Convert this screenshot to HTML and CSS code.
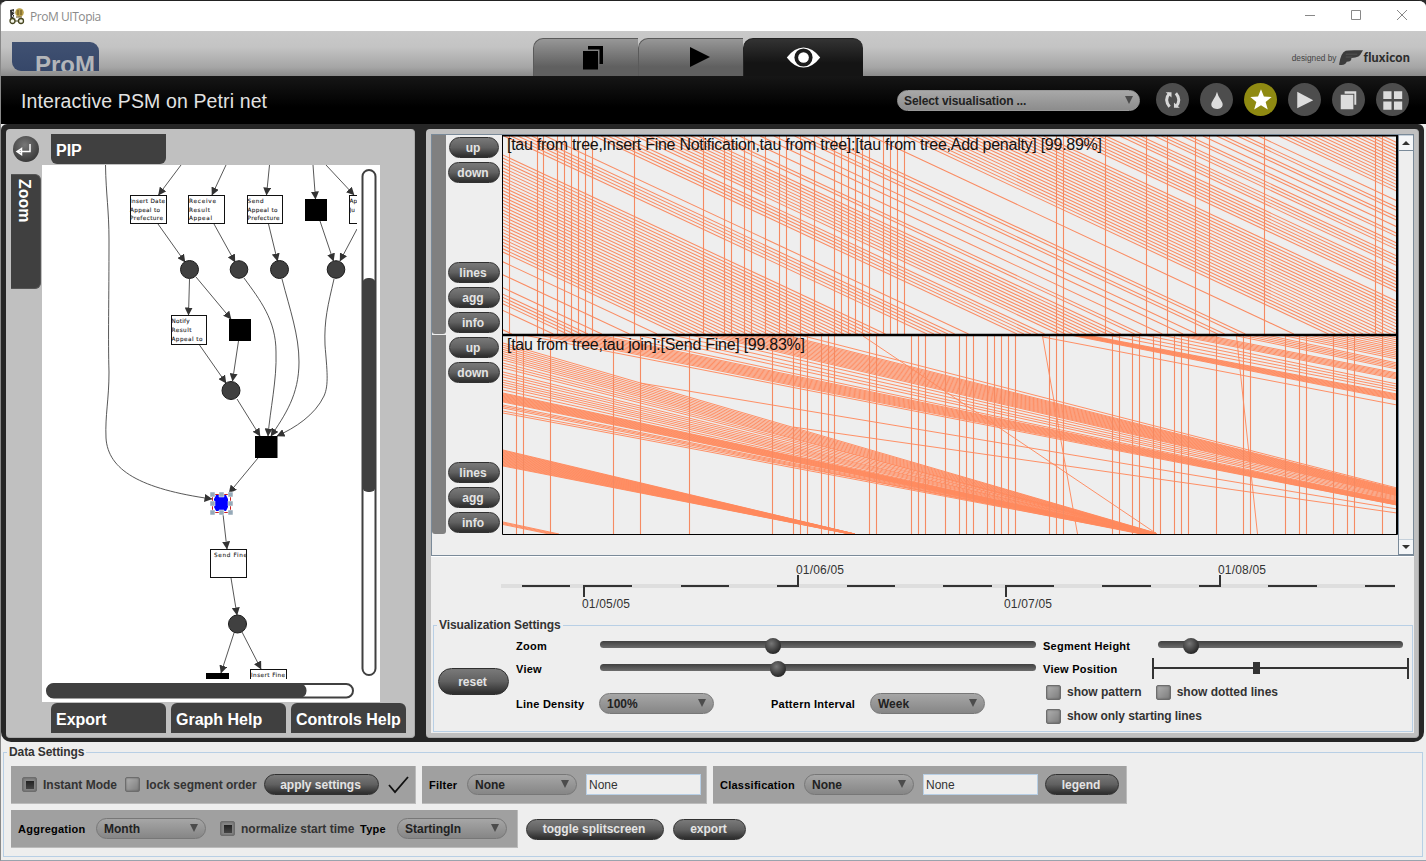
FILE: index.html
```html
<!DOCTYPE html>
<html lang="en">
<head>
<meta charset="utf-8">
<title>ProM UITopia</title>
<link rel="stylesheet" href="styles.css">
</head>
<body>
<div class="window">
  <header class="titlebar">
    <svg class="app-icon" width="16" height="17" viewBox="0 0 16 17">
      <path d="M1 2l4-1v10H1.500z" fill="#333"/><path d="M3 3l3 2-3 3 4 3" fill="none" stroke="#ddd"/>
      <circle cx="10.500" cy="4.500" r="4.300" fill="#b9a04a"/><path d="M9 2v5M12 2v5M7 9h6" stroke="#5c4a1d"/>
      <g fill="#f4f4e8" stroke="#45451f" stroke-width="1.300"><circle cx="3.500" cy="13" r="2.500"/><circle cx="12" cy="13" r="2.500"/></g><path d="M6 13h4" stroke="#45451f"/>
    </svg>
    <span class="app-name">ProM UITopia</span>
    <svg class="win-controls" width="104" height="14" viewBox="0 0 104 14" fill="none" stroke="#888">
      <path d="M1 6.500h10M47.500 1.500h9v9h-9zM93 1l10 10M103 1L93 11"/>
    </svg>
  </header>

  <div class="brandbar">
    <div class="prom-logo"><span>ProM</span></div>
    <nav class="tabs">
      <div class="tab"><svg width="20" height="24" viewBox="0 0 20 24"><path d="M5 0h15v18h-3.500V3.500H5z"/><path d="M0 5h15v18.500H0z"/></svg></div>
      <div class="tab tab-play"><svg width="20" height="20" viewBox="0 0 20 20"><path d="M0 0l20 10L0 20z"/></svg></div>
      <div class="tab tab-active"><svg width="35" height="21" viewBox="0 0 35 22"><path d="M0 11Q8 .5 17.500 .5T35 11Q27 21.500 17.500 21.500T0 11z" fill="#fff"/><circle cx="17.500" cy="11" r="9.500" fill="#1c1c1c"/><circle cx="17.500" cy="11" r="5.600" fill="#fff"/></svg></div>
    </nav>
    <div class="designed"><span class="by">designed by</span>
      <svg width="24" height="18" viewBox="0 0 25 18"><path d="M0 16Q2 3 7 1.500Q9 .5 25 1l-3 5q-1 2-5 2.500l-4 .5q0 4-5 4-1 4-8 3z" fill="#3c3c3c"/><path d="M7 5h12M7 8h7" stroke="#555" fill="none"/></svg>
      <b>fluxicon</b></div>
  </div>

  <div class="actionbar">
    <h1>Interactive PSM on Petri net</h1>
    <div class="combo combo-vis"><span>Select visualisation ...</span><i></i></div>
    <div class="actions">
      <div class="round"><svg viewBox="0 0 34 34"><g fill="none" stroke="#d8d8d8" stroke-width="3"><path d="M14 10.500Q8 17 14 24.500"/><path d="M20.500 24.500Q26.500 17.500 20.500 10.500"/></g><path d="M10 9.500h6v5.500zM24.500 25.500h-6V20z" fill="#d8d8d8"/></svg></div>
      <div class="round"><svg viewBox="0 0 34 34"><path d="M17.500 9q1 4.500 4 8.500 4 6-.5 8.500-3 1.500-7 0-4.500-2.500-.5-8.500 3-4 4-8.500z" fill="#ddd"/></svg></div>
      <div class="round star"><svg viewBox="0 0 34 34"><path d="M17.500 6.500l3 7.500 8 .5-6.200 5 2.200 7.800-7-4.300-7 4.300 2.200-7.800-6.200-5 8-.5z" fill="#fff"/></svg></div>
      <div class="round"><svg viewBox="0 0 34 34"><path d="M9.500 9v17l16.500-8.300z" fill="#ddd"/></svg></div>
      <div class="round"><svg viewBox="0 0 34 34"><path d="M13 8.500h12v14h-2V11H13z" fill="#ddd"/><path d="M9 12h13v15H9z" fill="#ddd"/></svg></div>
      <div class="round"><svg viewBox="0 0 34 34"><path d="M7.500 8.500h8.500v8H7.500zM18.500 8.500h8.500v8h-8.500zM7.500 19h8.500v8.500H7.500zM18.500 19h8.500v8.500h-8.500z" fill="#ddd"/></svg></div>
    </div>
  </div>

  <main class="workspace">
    <section class="panel graph-panel">
      <div class="side">
        <div class="back"><svg width="26" height="26" viewBox="0 0 26 26"><path d="M17 8v7.500H5M8.500 12.500l-4.500 3 4.500 3z" fill="none" stroke="#fff" stroke-width="1.500"/></svg></div>
        <div class="zoom-tab"><span>Zoom</span></div>
      </div>
      <div class="graph-main">
        <div class="top-tabs"><div class="gtab gtab-top">PIP</div></div>
        <svg class="graph" width="338" height="537" viewBox="42 165 338 537">
          <defs>
            <marker id="arrow" markerWidth="8" markerHeight="8" refX="7.500" refY="4" orient="auto" markerUnits="userSpaceOnUse"><path d="M0 0l8 4-8 4z" fill="#333"/></marker>
            <clipPath id="canvas"><path d="M42 165h315v514H42z"/></clipPath>
          </defs>
          <g clip-path="url(#canvas)">
            <g class="edges" marker-end="url(#arrow)">
              <path d="M105.500 165C106 195 109 210 109 240C109 300 108 340 109 372C109 400 105 415 106 438C108 470 140 489 212 499"/>
              <path d="M181 165L158.500 195"/><path d="M226 165L212 195"/><path d="M269.500 165L266.500 195"/><path d="M313 165L315.500 199"/><path d="M326 165L354 195"/>
              <path d="M158 224L185 262"/><path d="M214 224L235 262"/><path d="M268.500 224L277.500 261"/><path d="M320 221L333.500 261"/><path d="M357 229L340 261"/>
              <path d="M189.500 279L188.500 315"/><path d="M196 277L231 319"/>
              <path d="M199.500 345L226 383"/><path d="M238.500 341L232.500 381"/><path d="M237 399L260 436"/>
              <path d="M244 278C260 300 276 320 276 352C277 380 270 410 268 436"/>
              <path d="M282 279C290 310 299 335 299 362C299 395 285 415 271 436"/>
              <path d="M334 279C328 305 324 320 325 345C327 370 329 385 324 396C315 415 295 428 277 436"/>
              <path d="M258 458L229 493"/><path d="M223 514L227 549"/><path d="M231 578L237 615"/><path d="M234 633L221 673"/><path d="M242 632L261 669"/>
            </g>
            <g class="boxes">
              <rect x="130.500" y="195.500" width="36" height="28"/><rect x="188.500" y="195.500" width="36" height="28"/><rect x="247.500" y="195.500" width="35" height="28"/><rect x="349.500" y="195.500" width="36" height="28"/>
              <rect x="171.500" y="315.500" width="35" height="29"/><rect x="210.500" y="549.500" width="36" height="28"/><rect x="250.500" y="669.500" width="36" height="28"/>
            </g>
            <path d="M305 199h22v22h-22zM229 319h22v22h-22zM255 436h22.500v22H255zM206 673h23v22h-23z"/>
            <g class="places"><circle cx="189.500" cy="269.500" r="9"/><circle cx="239" cy="269.500" r="8.800"/><circle cx="279.500" cy="269.500" r="9"/><circle cx="336" cy="269.500" r="8.800"/><circle cx="231" cy="390.500" r="9"/><circle cx="237.500" cy="624" r="9"/></g>
            <g class="node-text">
              <text x="130" y="203" textLength="35">Insert Date</text><text x="130" y="211.500" textLength="30">Appeal to</text><text x="130" y="220" textLength="33">Prefecture</text>
              <text x="189" y="203" textLength="27">Receive</text><text x="189" y="211.500" textLength="21">Result</text><text x="189" y="220" textLength="23">Appeal</text>
              <text x="247.500" y="203" textLength="16">Send</text><text x="247.500" y="211.500" textLength="30">Appeal to</text><text x="247.500" y="220" textLength="32">Prefecture</text>
              <text x="349.500" y="203">Ap</text><text x="349.500" y="211.500">Ju</text>
              <text x="171.500" y="323" textLength="18">Notify</text><text x="171.500" y="332" textLength="20">Result</text><text x="171.500" y="341" textLength="31">Appeal to</text>
              <text x="214" y="557" textLength="33">Send Fine</text><text x="251" y="677" textLength="34">Insert Fine</text>
            </g>
            <rect x="212.500" y="494.500" width="18" height="18" fill="none" stroke="#c22"/>
            <path d="M216 495h10l2 4v8l-2 4h-10l-2-4v-8z" fill="#00f"/>
            <path class="grips" d="M210 492h5v5h-5zM219 492h5v5h-5zM228 492h5v5h-5zM210 501h5v5h-5zM228 501h5v5h-5zM210 510h5v5h-5zM219 510h5v5h-5zM228 510h5v5h-5z"/>
          </g>
          <g class="bars"><rect x="362.500" y="170" width="13" height="505" rx="6.500"/><rect x="47" y="684" width="306" height="13.500" rx="6.700"/></g>
          <rect x="362" y="278" width="14" height="214" rx="6" fill="#404040"/><rect x="46.500" y="683.500" width="260" height="14.500" rx="7" fill="#404040"/>
        </svg>
        <div class="bottom-tabs"><div class="gtab">Export</div><div class="gtab">Graph Help</div><div class="gtab">Controls Help</div></div>
      </div>
    </section>

    <section class="panel vis-panel">
      <div class="scrollpane">
        <div class="controls">
          <div class="segment"><div class="handle"></div><div class="seg-buttons"><button class="first">up</button><button>down</button><button class="push">lines</button><button>agg</button><button>info</button></div></div>
          <div class="segment"><div class="handle"></div><div class="seg-buttons"><button class="first">up</button><button>down</button><button class="push">lines</button><button>agg</button><button>info</button></div></div>
        </div>
        <svg class="chart" width="896" height="420" viewBox="502 135 896 420">
          <defs><clipPath id="c1"><path d="M503 136h894v198H503z"/></clipPath><clipPath id="c2"><path d="M503 336h894v198H503z"/></clipPath></defs>
          <g clip-path="url(#c1)"><path id="pattern-a" class="lines"/><path id="days-a" class="days"/></g>
          <g clip-path="url(#c2)"><path id="pattern-b" class="lines lines-b"/><path id="days-b" class="days"/></g>
          <path d="M502.500 135.500h895v399h-895z" fill="none" stroke="#000"/><path d="M1397 136v398M502 135.500h896" stroke="#000" stroke-width="2"/><path d="M502 335h896" stroke="#000" stroke-width="2.400"/>
          <g class="seg-title"><text x="507" y="150" textLength="595">[tau from tree,Insert Fine Notification,tau from tree]:[tau from tree,Add penalty] [99.89%]</text><text x="507" y="350" textLength="298">[tau from tree,tau join]:[Send Fine] [99.83%]</text></g>
        </svg>
        <div class="vscroll"><div class="arrow"><i class="up"></i></div><div class="arrow"><i class="down"></i></div></div>
      </div>

      <svg class="timeline" width="983" height="60" viewBox="431 557 983 60">
        <path d="M501 584h894v4H501z" fill="#dedede"/>
        <path d="M522 585h48v2h-48zM583 585h49v2h-49zM681 585h48v2h-48zM777 585h22v2h-22zM847 585h48v2h-48zM943 585h49v2h-49zM1005 585h49v2h-49zM1102 585h49v2h-49zM1199 585h22v2h-22zM1268 585h49v2h-49zM1365 585h30v2h-30zM583 585h2v12h-2zM797 575h2v12h-2zM1005 585h2v12h-2zM1219 575h2v12h-2z" fill="#333"/>
        <g class="dates"><text x="582" y="608" textLength="48">01/05/05</text><text x="796" y="574" textLength="48">01/06/05</text><text x="1004" y="608" textLength="48">01/07/05</text><text x="1218" y="574" textLength="48">01/08/05</text></g>
      </svg>

      <div class="group vis-group">
        <div class="group-title"><span class="t-vis">Visualization Settings</span></div>
        <div class="vis-body">
          <button class="reset">reset</button>
          <div class="vis-mid">
            <div class="vrow"><label>Zoom</label><div class="slider"><i class="k1"></i></div></div>
            <div class="vrow"><label>View</label><div class="slider"><i class="k2"></i></div></div>
            <div class="vrow vrow-combos"><label>Line Density</label><div class="combo w115"><span>100%</span><i></i></div><label class="pi">Pattern Interval</label><div class="combo w115 c-week"><span>Week</span><i></i></div></div>
          </div>
          <div class="vis-right">
            <div class="vrow"><label>Segment Height</label><div class="slider short"><i class="k3"></i></div></div>
            <div class="vrow"><label>View Position</label><svg width="257" height="22" viewBox="0 0 257 22"><path d="M0 0h2v21H0zM255 0h2v21h-2zM2 9h253v2H2zM101 4h7v12h-7z" fill="#333"/></svg></div>
            <div class="crow"><i class="check"></i><span class="t-sp">show pattern</span><i class="check c2"></i><span class="t-sd">show dotted lines</span></div>
            <div class="crow"><i class="check"></i><span class="t-so">show only starting lines</span></div>
          </div>
        </div>
      </div>
    </section>
  </main>

  <div class="group data-group">
    <div class="group-title"><span class="t-data">Data Settings</span></div>
    <div class="data-row">
      <div class="box b1"><i class="check on"></i><span class="t-im">Instant Mode</span><i class="check"></i><span class="t-lock">lock segment order</span><button class="apply">apply settings</button>
        <svg width="22" height="18" viewBox="0 0 22 18"><path d="M1 9l6 7L20 1" fill="none" stroke="#111" stroke-width="1.800"/></svg></div>
      <div class="box b2"><label>Filter</label><div class="combo w110"><span>None</span><i></i></div><div class="field">None</div></div>
      <div class="box b3"><label class="t-cl">Classification</label><div class="combo w110"><span>None</span><i></i></div><div class="field">None</div><button class="legend">legend</button></div>
    </div>
    <div class="data-row">
      <div class="box b4"><label class="t-ag">Aggregation</label><div class="combo w110"><span>Month</span><i></i></div><i class="check on"></i><span class="t-norm">normalize start time</span><label class="t-ty">Type</label><div class="combo w110"><span>StartingIn</span><i></i></div></div>
      <button class="toggle">toggle splitscreen</button><button class="export">export</button>
    </div>
  </div>
</div>
<script src="lines.js"></script>
</body>
</html>
```
FILE: lines.js
```js
// Verticals are cases finished on the same day; diagonals span from the start day (top) to the end day (bottom).
function verticals(xs, y1, y2) {
  return xs.map(function (x) { return 'M' + (x + 0.5) + ' ' + y1 + 'V' + y2; }).join('');
}
function range(a, b) { var r = []; for (var i = a; i <= b; i++) r.push(i); return r; }
function draw(id, d) { document.getElementById(id).setAttribute('d', d); }

var DAY = 6.92, SPAN = 423;
var days = [-60, -54, -52, -51, -50, -49, -47, -43, -39]
  .concat(range(-36, -6), [0, 1, 2, 3, 4, 6], range(13, 17), range(19, 28),
    [30, 31, 34, 37, 39, 42, 43, 45, 46, 53], range(58, 78), range(81, 87),
    [89, 90, 91, 92, 94, 95, 96, 98, 99, 101, 103, 104, 106, 107, 109], range(112, 127));
draw('pattern-a', days.map(function (k) {
  var x = 504 + k * DAY;
  return 'M' + x.toFixed(1) + ' 136L' + (x + SPAN).toFixed(1) + ' 334';
}).join(''));
draw('days-a', verticals([509, 537, 543, 557, 564, 571, 578, 585, 592, 634, 703, 724, 731, 744, 751, 765, 779, 786, 800, 814,
  834, 841, 848, 855, 862, 869, 883, 890, 897, 904, 1056, 1063, 1105, 1146, 1167, 1195, 1209, 1264, 1375, 1382], 136, 334));

// n lines fanned between two edges: [x1, yTop1, yBottom1, x2, yTop2, yBottom2]
function fan(x1, a1, b1, x2, a2, b2, n) {
  var s = '';
  for (var i = 0; i < n; i++) {
    var t = n > 1 ? i / (n - 1) : 0;
    s += 'M' + x1 + ' ' + (a1 + (b1 - a1) * t).toFixed(2) + 'L' + x2 + ' ' + (a2 + (b2 - a2) * t).toFixed(2);
  }
  return s;
}
draw('pattern-b', fan(503, 343, 360, 1156, 533, 535, 9) +
  fan(503, 363, 368, 1154, 533, 534, 3) + fan(503, 372, 377, 1153, 533, 534, 3) + fan(503, 380, 387, 1151, 533, 534, 4) + fan(503, 390, 390, 1150, 534, 534, 1) +
  fan(503, 393, 402, 1148, 533, 535, 12) + fan(503, 405, 408, 1146, 534, 535, 3) + fan(503, 411, 413, 1150, 534, 535, 2) +
  fan(503, 450, 466, 855, 534, 535, 22) + fan(503, 522, 524.5, 559, 534, 536, 4) +
  fan(640, 383, 383, 1397, 509, 509, 1) + fan(793, 427, 427, 1397, 513, 513, 1) +
  fan(503, 259, 259, 1397, 488, 488, 1) + fan(503, 264, 288, 1397, 489, 496, 15) + fan(503, 292, 302, 1397, 497, 499, 3) +
  fan(503, 306, 312, 1397, 500, 501, 2) + fan(503, 315, 328, 1397, 501.5, 505, 10) + fan(503, 331, 331, 1397, 505, 505, 1) +
  fan(1043, 337, 337, 1397, 405, 405, 1) + fan(1050, 328, 331, 1397, 394, 400, 8) +
  fan(1050, 312, 324, 1397, 384, 391, 4) + fan(1150, 324, 330, 1397, 373, 379, 6) +
  fan(1150, 310, 318, 1397, 363, 369, 5) + fan(1150, 295, 308, 1397, 348, 359, 7) + fan(1150, 282, 292, 1397, 338, 346, 5) +
  'M863 336L1157 534M1042.500 336L1077.500 534M1236.500 336L1257.500 534');
draw('days-b', verticals([516, 523, 550, 613, 640, 689, 772, 793, 800, 807, 821, 828, 834, 869, 876, 911, 918, 925, 945, 959, 966,
  973, 987, 994, 1001, 1008, 1015, 1049, 1056, 1063, 1112, 1119, 1132, 1139, 1153, 1160, 1174, 1181, 1188, 1216, 1243,
  1250, 1285, 1299, 1306, 1333, 1347, 1354, 1382], 336, 534));
```
FILE: styles.css
```css
* { box-sizing: border-box; }
body { margin: 0; background: #2b2b2b; font-family: "Liberation Sans", Arial, sans-serif; font-size: 12px; font-weight: bold; color: #333; }
.window { display: flex; flex-direction: column; width: 1426px; height: 861px; background: #eee; border-radius: 7px 7px 0 0; border: 0 solid #888; border-left: 1px solid #888; border-top: 1px solid #222; border-bottom: 1px solid #9aa3ad; overflow: hidden; white-space: nowrap; }

.titlebar { height: 30px; flex: none; background: #fff; display: flex; align-items: center; padding: 0 18px 0 8px; }
.app-name { margin-left: 5px; font: 12px "Open Sans", "Noto Sans", sans-serif; letter-spacing: -0.45px; color: #8a8a8a; }
.win-controls { margin-left: auto; }

.brandbar { height: 45px; flex: none; display: flex; background: linear-gradient(#c9c9c9 0%, #c4c4c4 35%, #a6a6a6 80%, #8a8a8a 100%); }
.prom-logo { width: 87px; height: 29px; margin: 11px 0 0 11px; background: linear-gradient(#405172, #364769); border-radius: 0 9px 0 9px; overflow: hidden; color: #b3b5b9; font-size: 24px; line-height: 27px; }
.prom-logo span { display: block; padding: 9px 0 0 23px; }
.tabs { display: flex; margin: 7px 0 0 434px; }
.tab { width: 105px; height: 38px; display: flex; align-items: center; justify-content: center; padding-left: 14px; border: 1px solid #5a5a5a; border-right: 0; border-bottom: 0; border-radius: 10px 0 0 0; background: linear-gradient(#979797, #606060 75%); }
.tab-play { padding: 0 0 2px 18px; }
.tab-active { width: 120px; padding-left: 0; border-color: #222; border-radius: 10px 10px 0 0; background: linear-gradient(#333, #141414 65%); }
.designed { margin: 17px 16px 0 auto; height: 20px; display: flex; align-items: center; color: #2d2d2d; font-size: 12.500px; }
.designed b { font-family: Lato, "Open Sans", sans-serif; font-weight: 900; font-size: 12.500px; letter-spacing: 0.200px; margin-top: -1px; }
.by { font-size: 8.300px; font-weight: normal; color: #444; margin-right: 3px; }

.actionbar { height: 48px; flex: none; display: flex; align-items: center; background: linear-gradient(#161616, #000 65%); padding-right: 17px; }
h1 { margin: 2px auto 0 20px; font-size: 19.500px; font-weight: normal; color: #e2e2e2; letter-spacing: 0.120px; }
.actions { display: flex; gap: 11px; margin: -1px 0 0 16px; }
.round { width: 33px; height: 33px; border-radius: 50%; background: #4d4d4d; }
.round svg { width: 33px; height: 33px; display: block; }
.star { background: #8f8a12; }

.combo { flex: none; height: 21px; display: flex; align-items: center; justify-content: space-between; padding: 0 7px; border: 1px solid #777; border-radius: 11px; background: linear-gradient(#a6a6a6, #868686); color: #222; font-size: 12px; }
.combo span { padding-top: 1px; }
.combo i { border: 5px solid transparent; border-top: 8px solid #4c4c4c; border-bottom: 0; border-left-width: 4.500px; border-right-width: 4.500px; margin-top: -1px; }
.combo-vis { width: 243px; margin-top: 1px; padding: 0 6px; letter-spacing: -0.100px; border-color: #999; background: linear-gradient(#a8a8a8, #8c8c8c); }
.w115 { width: 115px; }
.w110 { width: 110px; }

button { flex: none; font: bold 12px "Liberation Sans", Arial, sans-serif; color: #e4e4e4; height: 21px; padding: 0 2px 0 0; border: 1px solid #303030; border-radius: 11px; background: linear-gradient(#777 5%, #606060 50%, #303030 95%); }

.workspace { flex: none; height: 618px; display: flex; gap: 11px; padding: 5px 6px 4px 5px; background: #262626; border-radius: 6px 6px 10px 10px; margin-right: 2px; }
.panel { background: #c0c0c0; border-radius: 4px; border: 1px solid #a9a9a9; border-width: 0 1px 1px 0; }
.graph-panel { width: 409px; flex: none; display: flex; }
.side { width: 36px; padding: 7px 0 0 5px; }
.back { width: 26px; height: 26px; margin-left: 2px; border-radius: 50%; background: radial-gradient(circle at 45% 35%, #777, #3a3a3a 75%); }
.zoom-tab { width: 30px; height: 115px; margin-top: 12px; background: #404040; border-radius: 0 6px 6px 0; border: 1px solid #555; border-left: 0; color: #fff; font-size: 16px; display: flex; justify-content: center; }
.zoom-tab span { writing-mode: vertical-rl; padding: 4px 3px 0 0; line-height: 26px; }
.graph-main { width: 372px; display: flex; flex-direction: column; }
.top-tabs { height: 36px; padding: 5px 0 0 9px; }
.bottom-tabs { display: flex; gap: 6px; padding: 1px 0 0 9px; }
.gtab { width: 115px; height: 30px; margin-right: -1px; padding-left: 5px; background: #404040; color: #fff; font-size: 16px; line-height: 33px; border-radius: 6px 6px 0 0; flex: none; }
.gtab-top { border-radius: 0 0 6px 6px; }
.graph { background: #fff; display: block; }
.edges path { fill: none; stroke: #444; stroke-width: 0.900; }
.boxes rect { fill: #fff; stroke: #111; }
.places circle { fill: #404040; stroke: #1a1a1a; }
.node-text { font: 5.700px "DejaVu Sans", sans-serif; fill: #111; stroke: #333; stroke-width: 0.100; }
.grips { fill: #96a9b8; stroke: #fff; stroke-width: 0.500; }
.bars rect { fill: #fff; stroke: #404040; stroke-width: 2; }

.vis-panel { width: 993px; flex: none; padding: 5px 4px 0 5px; }
.scrollpane { height: 422px; display: flex; background: #eee; border: 1px solid #7a8a99; }
.controls { width: 70px; flex: none; }
.segment { height: 200px; display: flex; }
.handle { width: 14px; height: 199px; background: #808080; border-radius: 0 0 3px 3px; }
.seg-buttons { width: 56px; display: flex; flex-direction: column; align-items: center; gap: 4px; padding: 2px 0 0; height: 199px; }
.seg-buttons button { width: 52px; }
.seg-buttons .first { width: 50px; }
.seg-buttons .push { margin-top: 75px; }
.chart { display: block; flex: none; }
.lines { fill: none; stroke: #fa8c63; stroke-width: 1.050; }
.lines-b { stroke: #ff8a5e; stroke-width: 0.950; }
.days { fill: none; stroke: #f58a62; stroke-width: 1.100; }
.seg-title { font-size: 16px; font-weight: normal; fill: #111; }
.vscroll { flex: 1; display: flex; flex-direction: column; justify-content: space-between; border-left: 1px solid #7a8a99; }
.arrow { height: 16px; display: flex; align-items: center; justify-content: center; background: #f4f6f8; border-bottom: 1px solid #7a8a99; border-top: 1px solid #c5d0da; }
.arrow i { border: 4.500px solid transparent; }
.arrow .up { border-bottom-color: #333; border-top: 0; }
.arrow .down { border-top-color: #333; border-bottom: 0; }
.timeline { display: block; background: #eee; border-top: 1px solid #fff; height: 61px; width: 983px; }
.dates { font-size: 12px; font-weight: normal; fill: #333; }

.group { position: relative; }
.group-title { display: flex; align-items: center; height: 16px; letter-spacing: -0.100px; }
.group-title::before { content: ""; width: 4px; height: 1px; background: #b8cfe5; margin-right: 2px; }
.group-title::after { content: ""; flex: 1; height: 1px; background: #b8cfe5; margin-left: 2px; }
.vis-group { background: #eee; height: 116px; padding: 0 1px 2px 2px; }
.vis-body { margin-top: -8px; padding: 9px 4px 0 4px; height: 107px; border: 1px solid #b8cfe5; border-top: 0; display: flex; }
.reset { width: 71px; height: 27px; border-radius: 14px; margin-top: 34px; }
.vis-mid { width: 527px; flex: none; padding-left: 7px; }
.vis-right { padding-left: 7px; flex: none; }
.vrow { height: 23px; display: flex; align-items: center; }
.vis-right .vrow svg { margin-left: -6px; }
label { flex: none; color: #000; font-size: 11px; letter-spacing: 0.250px; }
.vis-mid label:first-child { width: 84px; }
.vis-right .vrow label { width: 115px; }
.slider { width: 436px; height: 7px; border-radius: 4px; background: linear-gradient(#404040, #6c6c6c); display: flex; align-items: center; margin-top: -2px; }
.slider i { width: 16px; height: 16px; margin-top: 3px; border-radius: 50%; background: radial-gradient(circle at 40% 35%, #777, #252525 75%); }
.short { width: 245px; }
.k1 { margin-left: 165px; }
.k2 { margin-left: 170px; }
.k3 { margin-left: 25px; }
.vrow-combos { height: 46px; }
.vrow-combos label { padding-top: 1px; }
.pi { width: 100px; margin-left: 57px; }
.vrow-combos .combo { margin-left: -1px; }
.crow { height: 24px; display: flex; align-items: center; padding-left: 3px; }
.crow span { margin-left: 6px; letter-spacing: 0; }
.crow .t-so { letter-spacing: -0.080px; }
.check { flex: none; width: 15px; height: 15px; border-radius: 2px; border: 1px solid #6d6d6d; background: linear-gradient(135deg, #b0b0b0, #7c7c7c); box-shadow: inset 0 0 2px #555; }
.check.on { background: linear-gradient(#222, #444) center / 8px 8px no-repeat, #858585; }
.c2 { margin-left: 14px; }

.data-group { height: 118px; padding: 2px 3px 4px 2px; }
.data-group::after { content: ""; position: absolute; left: 2px; right: 3px; top: 10px; bottom: 3px; border: 1px solid #b8cfe5; border-top: 0; }
.data-row { display: flex; align-items: center; gap: 6px; padding: 0 0 6px 8px; }
.data-group .group-title { margin-bottom: 6px; }
.box { height: 38px; display: flex; align-items: center; background: #a0a0a0; flex: none; border-right: 1px solid #bbb; border-bottom: 1px solid #bbb; }
.box label, .box span { padding-top: 1px; }
.b1 { width: 405px; padding-left: 11px; }
.b2 { width: 285px; padding-left: 7px; }
.b3 { width: 414px; padding-left: 7px; }
.b4 { width: 507px; padding-left: 7px; }
.t-im { width: 82px; margin-left: 6px; }
.t-lock { width: 118px; margin-left: 6px; }
.apply { width: 115px; margin-right: 9px; }
.b2 label { width: 38px; }
.field { width: 115px; height: 21px; margin-left: 9px; padding-left: 2px; background: #eee; border: 1px solid #b8cfe5; font-weight: normal; line-height: 21px; }
.t-cl { width: 84px; }
.legend { width: 74px; margin-left: 7px; }
.t-ag { width: 78px; }
.b4 .check { margin-left: 14px; }
.t-norm { width: 119px; margin-left: 6px; }
.t-ty { width: 37px; }
.toggle { width: 138px; margin-left: 2px; }
.export { width: 73px; margin-left: 3px; }
```
